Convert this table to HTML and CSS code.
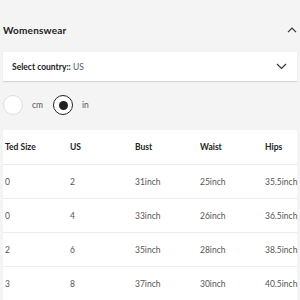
FILE: index.html
```html
<!DOCTYPE html>
<html lang="en">
<head>
    <meta charset="UTF-8">
    <meta name="viewport" content="width=device-width, initial-scale=1.0">
    <title>Size guide</title>
    <link rel="stylesheet" href="styles.css">
</head>
<body>
<div class="size-guide">
    <!-- section header -->
    <div class="section-head">
        <h2 class="section-title">Womenswear</h2>
        <svg class="chevron" width="10" height="6" viewBox="0 0 10 6">
            <path d="M1 5.2 L5 1.2 L9 5.2" fill="none" stroke="#333" stroke-width="1.2"/>
        </svg>
    </div>

    <!-- country select -->
    <div class="country-select">
        <span><b>Select country::</b> US</span>
        <svg class="chevron" width="11" height="7" viewBox="0 0 11 7">
            <path d="M1 1 L5.5 5.5 L10 1" fill="none" stroke="#333" stroke-width="1.2"/>
        </svg>
    </div>

    <!-- unit toggle -->
    <div class="units">
        <label class="unit">
            <span class="radio"></span>
            <span class="unit-label">cm</span>
        </label>
        <label class="unit">
            <span class="radio checked"></span>
            <span class="unit-label">in</span>
        </label>
    </div>

    <!-- size table -->
    <div class="size-table">
        <div class="row head">
            <div>Ted Size</div>
            <div>US</div>
            <div>Bust</div>
            <div>Waist</div>
            <div>Hips</div>
        </div>
        <div class="row">
            <div>0</div>
            <div>2</div>
            <div>31inch</div>
            <div>25inch</div>
            <div>35.5inch</div>
        </div>
        <div class="row">
            <div>0</div>
            <div>4</div>
            <div>33inch</div>
            <div>26inch</div>
            <div>36.5inch</div>
        </div>
        <div class="row">
            <div>2</div>
            <div>6</div>
            <div>35inch</div>
            <div>28inch</div>
            <div>38.5inch</div>
        </div>
        <div class="row">
            <div>3</div>
            <div>8</div>
            <div>37inch</div>
            <div>30inch</div>
            <div>40.5inch</div>
        </div>
    </div>
</div>
</body>
</html>
```

FILE: styles.css
```css
* {
    margin: 0;
    padding: 0;
    box-sizing: border-box;
}

body {
    font-family: Lato, "Noto Sans", sans-serif;
    background: #f4f4f4;
    color: #222;
    overflow: hidden;
}

.size-guide {
    padding: 18px 3px 0;
}

/* section header */
.section-head {
    display: flex;
    align-items: center;
    justify-content: space-between;
    height: 24px;
}

.section-title {
    font-size: 10px;
    font-weight: 700;
    letter-spacing: 0.2px;
}

.chevron {
    display: block;
}

/* country select */
.country-select {
    margin-top: 10px;
    height: 29px;
    background: #fff;
    display: flex;
    align-items: center;
    justify-content: space-between;
    padding: 0 10px 0 9px;
    font-size: 8.5px;
    color: #555;
    box-shadow: 0 1px 1px rgba(0, 0, 0, 0.12);
}

.country-select b {
    color: #222;
}

/* units */
.units {
    margin-top: 14px;
    display: flex;
    gap: 10px;
}

.unit {
    display: flex;
    align-items: center;
    gap: 9px;
}

.radio {
    width: 20px;
    height: 20px;
    border-radius: 50%;
    background: #fff;
    border: 1px solid #ddd;
    display: flex;
    align-items: center;
    justify-content: center;
}

.radio.checked {
    border: 1.5px solid #222;
}

.radio.checked::after {
    content: "";
    width: 9px;
    height: 9px;
    border-radius: 50%;
    background: #222;
}

.unit-label {
    font-size: 8.5px;
    color: #555;
}

/* table */
.size-table {
    margin-top: 15px;
    background: #fff;
}

.row {
    display: grid;
    grid-template-columns: 65px 65px 65px 65px 1fr;
    align-items: center;
    height: 34px;
    padding-left: 2px;
    font-size: 8.5px;
    color: #555;
    white-space: nowrap;
}

.row + .row {
    border-top: 1px solid #ececec;
}

.row.head {
    color: #222;
    font-weight: 700;
}
```
